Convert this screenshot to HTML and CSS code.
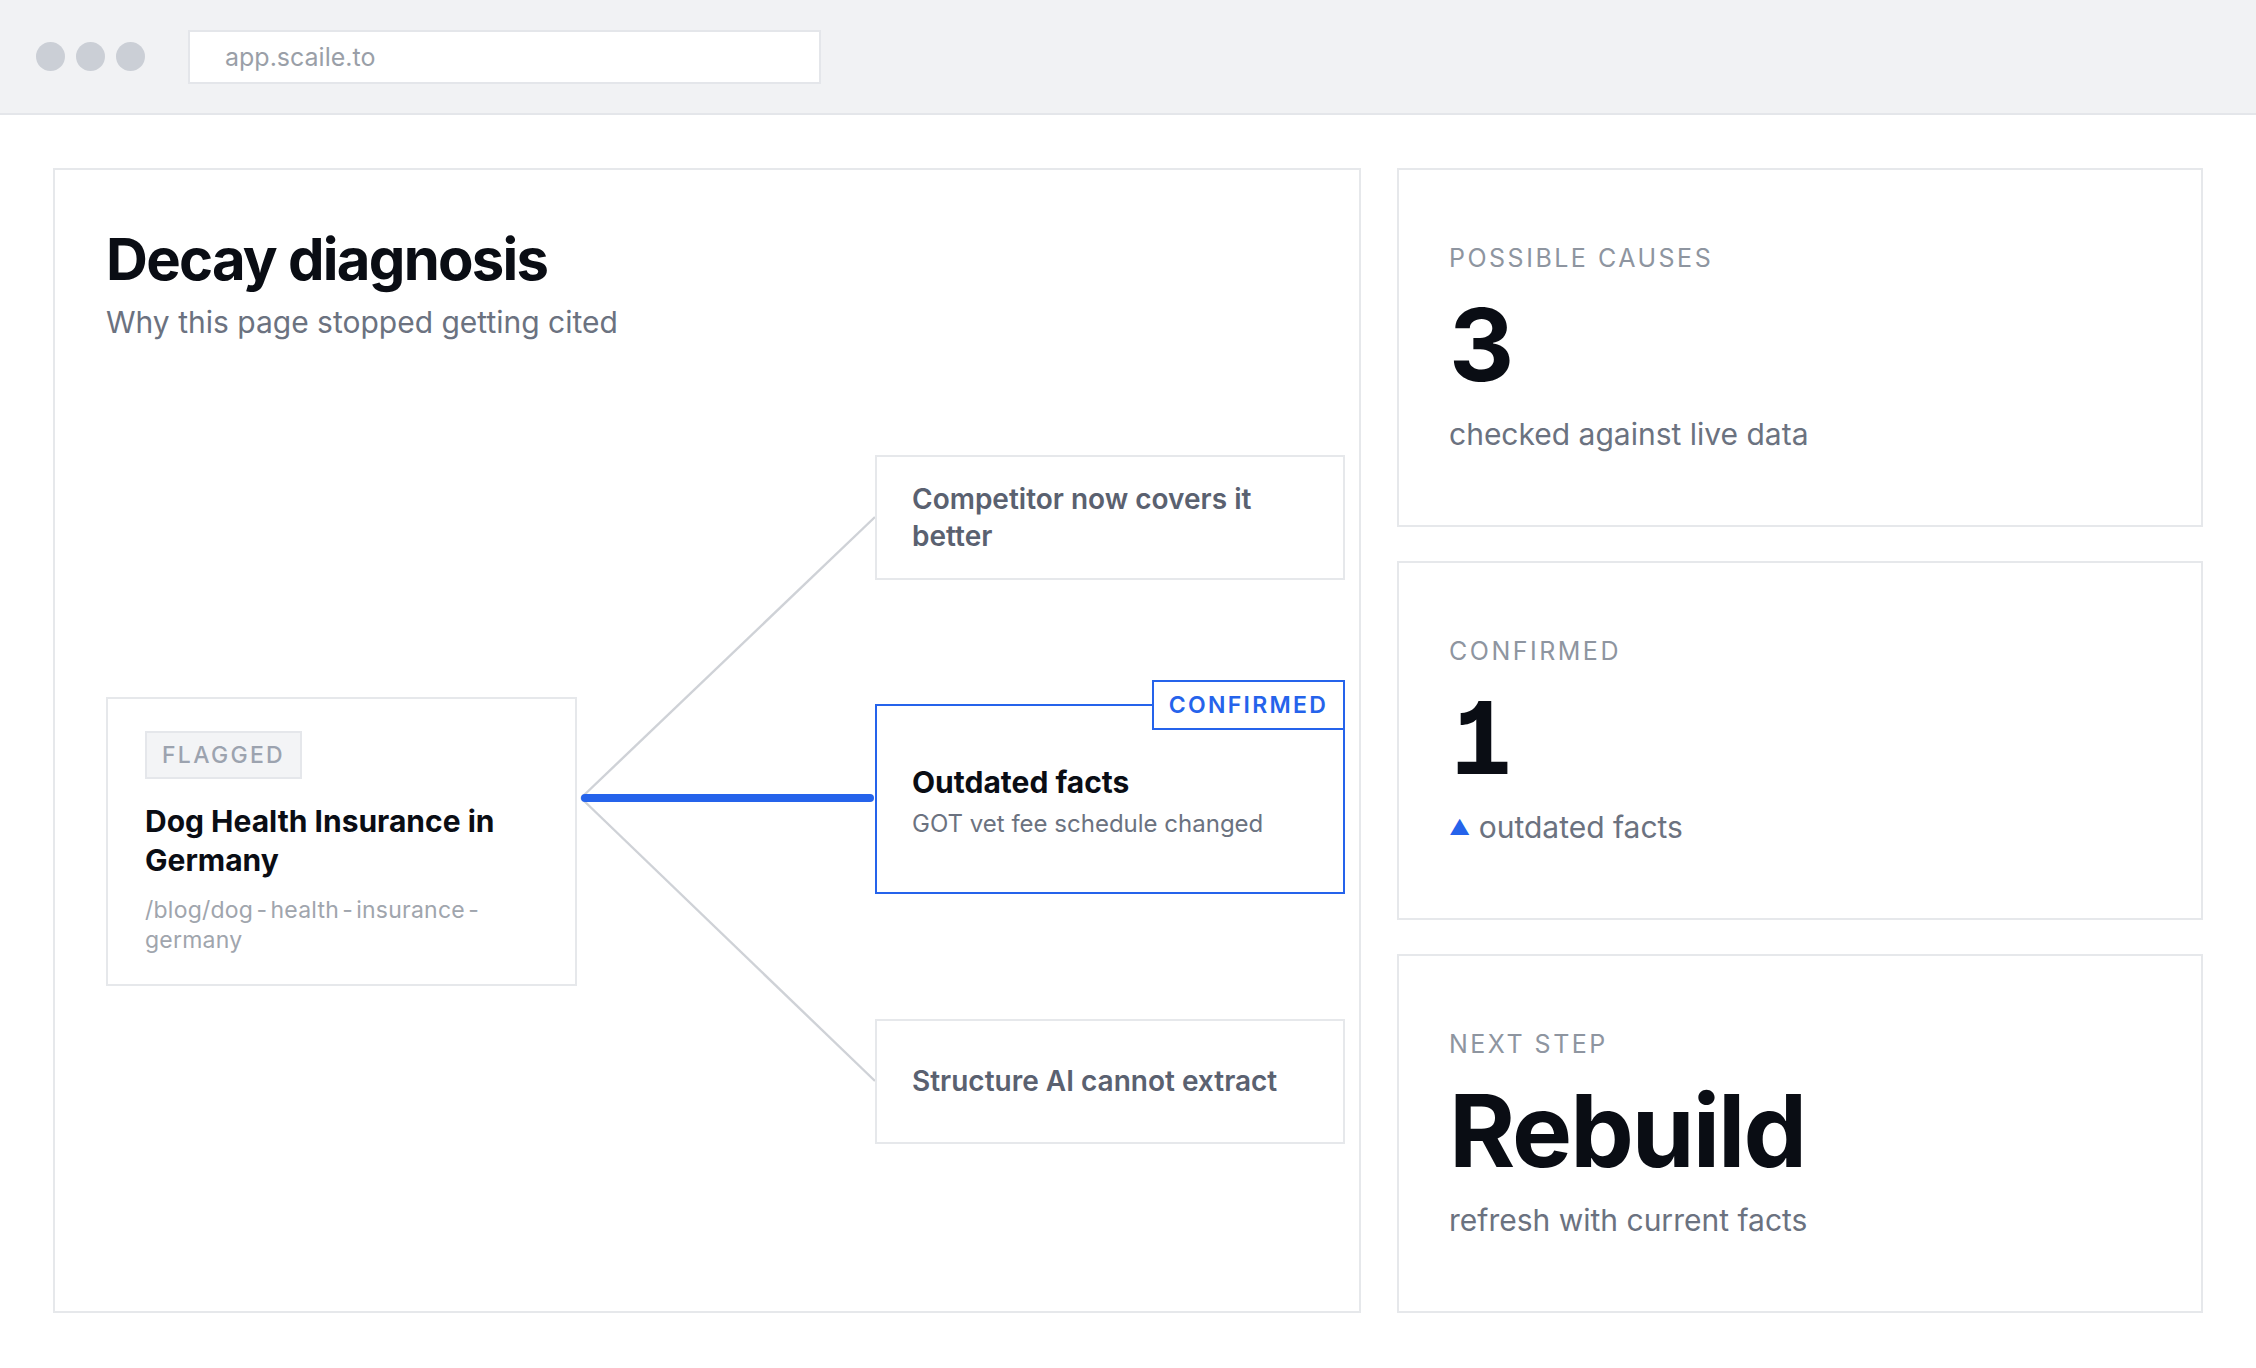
FILE: index.html
```html
<!DOCTYPE html>
<html lang="en">
<head>
<meta charset="utf-8">
<title>Decay diagnosis</title>
<link rel="stylesheet" href="styles.css">
</head>
<body>
<header class="chrome">
  <div class="dots"><span class="dot"></span><span class="dot"></span><span class="dot"></span></div>
  <div class="url">app.scaile.to</div>
</header>
<main class="page">
  <section class="panel">
    <h1 class="title">Decay diagnosis</h1>
    <p class="subtitle">Why this page stopped getting cited</p>
    <div class="diagram">
      <svg class="links" viewBox="0 0 1202 750" preserveAspectRatio="none" aria-hidden="true">
        <line x1="475" y1="399" x2="769" y2="118" stroke="#cfd2d7" stroke-width="2.4"/>
        <line x1="475" y1="399" x2="769" y2="682" stroke="#cfd2d7" stroke-width="2.4"/>
        <line x1="479" y1="399" x2="764" y2="399" stroke="#2563eb" stroke-width="8" stroke-linecap="round"/>
      </svg>
      <div class="node node-source">
        <span class="tag">FLAGGED</span>
        <div class="source-title">Dog Health Insurance in Germany</div>
        <div class="source-url">/blog/dog<span class="hy">-</span>health<span class="hy">-</span>insurance<span class="hy">-</span>germany</div>
      </div>
      <div class="node node-cause cause-1">
        <div class="cause-text">Competitor now covers it better</div>
      </div>
      <div class="node node-cause cause-2 is-confirmed">
        <span class="confirmed-tag">CONFIRMED</span>
        <div class="cause-title">Outdated facts</div>
        <div class="cause-sub">GOT vet fee schedule changed</div>
      </div>
      <div class="node node-cause cause-3">
        <div class="cause-text">Structure AI cannot extract</div>
      </div>
    </div>
  </section>
  <aside class="stats">
    <div class="stat">
      <div class="stat-label">POSSIBLE CAUSES</div>
      <div class="stat-value">3</div>
      <div class="stat-desc">checked against live data</div>
    </div>
    <div class="stat">
      <div class="stat-label">CONFIRMED</div>
      <div class="stat-value num-one">1</div>
      <div class="stat-desc"><span class="tri">▲</span> outdated facts</div>
    </div>
    <div class="stat">
      <div class="stat-label">NEXT STEP</div>
      <div class="stat-value">Rebuild</div>
      <div class="stat-desc">refresh with current facts</div>
    </div>
  </aside>
</main>
</body>
</html>
```

FILE: styles.css
```css
* { box-sizing: border-box; }

html, body {
  margin: 0;
  padding: 0;
  background: #ffffff;
  font-family: Inter, "Noto Sans", "Liberation Sans", sans-serif;
  color: #0a0d14;
}

.chrome {
  height: 115px;
  background: #f1f2f4;
  border-bottom: 2px solid #e4e6ea;
  display: flex;
  align-items: center;
  padding: 0 36px;
  gap: 43px;
}

.dots {
  display: flex;
  gap: 11px;
}

.dot {
  width: 29px;
  height: 29px;
  border-radius: 50%;
  background: #cbcfd6;
}

.url {
  width: 633px;
  height: 54px;
  background: #ffffff;
  border: 2px solid #e4e6ea;
  display: flex;
  align-items: center;
  padding-left: 35px;
  font-size: 25px;
  color: #9a9fa8;
}

.page {
  display: grid;
  grid-template-columns: 1308px 806px;
  gap: 36px;
  padding: 53px;
}

.panel {
  border: 2px solid #e6e8eb;
  height: 1145px;
  padding: 53px 51px 0 51px;
}

.title {
  margin: 0;
  font-size: 58px;
  line-height: 72px;
  font-weight: 700;
  letter-spacing: -0.03em;
  color: #0a0d14;
}

.subtitle {
  margin: 9px 0 0 0;
  font-size: 30px;
  line-height: 36px;
  color: #6b7280;
}

.diagram {
  position: relative;
  margin-top: 59px;
  width: 1202px;
  height: 750px;
}

.links {
  position: absolute;
  left: 0;
  top: 0;
  width: 1202px;
  height: 750px;
  overflow: visible;
}

.node {
  position: absolute;
  background: #ffffff;
  border: 2px solid #e6e8eb;
}

.node-source {
  left: 0;
  top: 298px;
  width: 471px;
  height: 289px;
  padding: 32px 30px 0 37px;
}

.tag {
  display: inline-flex;
  align-items: center;
  justify-content: center;
  width: 157px;
  height: 48px;
  background: #f3f4f6;
  border: 2px solid #e5e7eb;
  font-size: 23px;
  font-weight: 500;
  letter-spacing: 0.1em;
  color: #9ca3af;
}

.source-title {
  margin-top: 23px;
  font-size: 30px;
  line-height: 39px;
  font-weight: 700;
  color: #0a0d14;
}

.source-url {
  margin-top: 15px;
  font-size: 23px;
  line-height: 30px;
  color: #a0a5ad;
  letter-spacing: 0.01em;
}

.hy {
  margin: 0 0.14em;
}

.node-cause {
  left: 769px;
  width: 470px;
  display: flex;
  flex-direction: column;
  justify-content: center;
  padding: 0 36px 0 35px;
}

.cause-1 { top: 56px; height: 125px; }
.cause-2 { top: 305px; height: 190px; }
.cause-3 { top: 620px; height: 125px; }

.cause-text {
  font-size: 28px;
  line-height: 37px;
  font-weight: 600;
  color: #5a6170;
}

.is-confirmed {
  border-color: #2563eb;
}

.confirmed-tag {
  position: absolute;
  right: -2px;
  top: -26px;
  width: 193px;
  height: 50px;
  background: #ffffff;
  border: 2px solid #2563eb;
  display: flex;
  align-items: center;
  justify-content: center;
  font-size: 23px;
  font-weight: 600;
  letter-spacing: 0.1em;
  color: #2563eb;
}

.cause-title {
  font-size: 30px;
  line-height: 38px;
  font-weight: 700;
  color: #0a0d14;
  margin-top: 5px;
}

.cause-sub {
  margin-top: 7px;
  font-size: 24px;
  line-height: 32px;
  color: #6b7280;
}

.stats {
  display: flex;
  flex-direction: column;
  gap: 34px;
  height: 1145px;
}

.stat {
  flex: 1;
  border: 2px solid #e6e8eb;
  display: flex;
  flex-direction: column;
  justify-content: center;
  padding: 0 50px;
}

.stat-label {
  font-size: 25px;
  line-height: 30px;
  letter-spacing: 0.1em;
  color: #8e95a0;
}

.stat-value {
  margin-top: 21px;
  font-size: 101px;
  line-height: 100px;
  font-weight: 700;
  letter-spacing: -0.02em;
  color: #0a0d14;
}

.num-one {
  font-feature-settings: "cv01" 1, "ss02" 1, "tnum" 1;
}

.stat-desc {
  margin-top: 22px;
  font-size: 30px;
  line-height: 36px;
  color: #6b7280;
}

.tri {
  color: #2563eb;
  font-size: 21px;
  vertical-align: 3px;
}
```
